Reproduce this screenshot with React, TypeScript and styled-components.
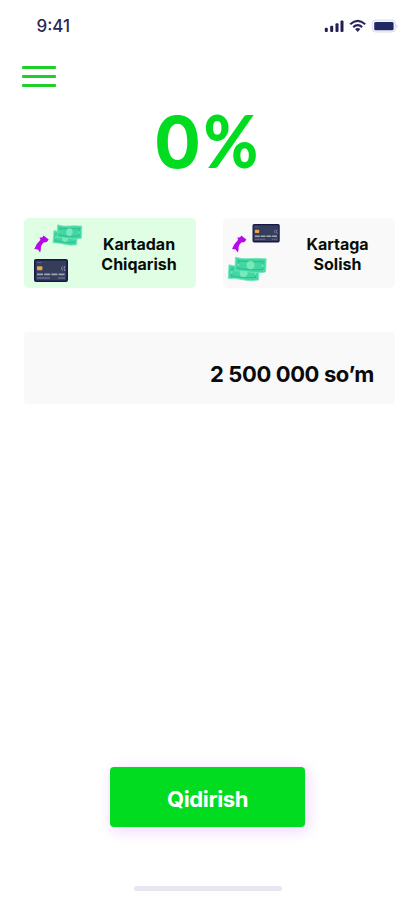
import React from "react";
import styled, { createGlobalStyle } from "styled-components";

const GlobalStyle = createGlobalStyle`
  * { box-sizing: border-box; }
  body { margin: 0; background: #fff; font-family: Inter, sans-serif; }
  button { font-family: inherit; border: 0; padding: 0; cursor: pointer; }
`;

const Screen = styled.div`
  width: 415px;
  height: 900px;
  display: flex;
  flex-direction: column;
  overflow: hidden;
  background: #fff;
`;

const StatusBar = styled.header`
  height: 52px;
  padding: 0 16px 0 36.5px;
  display: flex;
  align-items: center;
  justify-content: space-between;
`;

const Time = styled.span`
  font-size: 17px;
  line-height: 20px;
  font-weight: 500;
  color: #2b2857;
`;

const MenuButton = styled.button`
  width: 34px;
  height: 21px;
  margin: 14px 0 0 21.5px;
  display: flex;
  flex-direction: column;
  justify-content: space-between;
  background: none;
`;

const MenuLine = styled.span`
  display: block;
  width: 34px;
  height: 3px;
  border-radius: 1px;
  background: #20cf29;
`;

const Percent = styled.h1`
  margin: 8.5px 0 0;
  height: 88px;
  line-height: 88px;
  font-size: 72px;
  font-weight: 700;
  display: flex;
  align-items: baseline;
  justify-content: center;
  color: #02dc20;
`;

const Digit = styled.span`
  display: block;
  width: 46.5px;
  transform: scaleX(0.97);
  transform-origin: left;
`;

const PercentSign = styled.span`
  display: block;
  width: 60.5px;
  font-family: Lato, sans-serif;
  font-weight: 900;
  transform: translateX(2.5px) scaleX(0.92);
  transform-origin: left;
`;

const Options = styled.div`
  margin: 34px 20px 0 23.5px;
  height: 70.5px;
  display: flex;
  justify-content: space-between;
`;

const Option = styled.button<{ $active?: boolean }>`
  width: 172px;
  height: 70.5px;
  border-radius: 5px;
  display: flex;
  align-items: center;
  background: ${(p) => (p.$active ? "#dffee4" : "#f9f9f9")};
`;

const OptionLabel = styled.span<{ $shift?: number }>`
  flex: 1;
  margin-left: ${(p) => p.$shift ?? 0}px;
  padding-top: 2px;
  font-size: 16px;
  line-height: 20px;
  font-weight: 700;
  text-align: center;
  color: #080d08;
`;

const AmountField = styled.div`
  margin: 44px 20px 0 24px;
  height: 71.5px;
  padding: 13px 21px 0 0;
  border-radius: 4px;
  display: flex;
  align-items: center;
  justify-content: flex-end;
  background: #f9f9f9;
`;

const Amount = styled.span`
  font-size: 22px;
  line-height: 28px;
  font-weight: 700;
  letter-spacing: -0.38px;
  color: #0a0a0a;
`;

const Footer = styled.footer`
  margin-top: auto;
  height: 133.5px;
  display: flex;
  flex-direction: column;
  align-items: center;
`;

const SearchButton = styled.button`
  width: 195.5px;
  height: 60.5px;
  padding-top: 5px;
  border-radius: 4px;
  font-size: 22px;
  font-weight: 700;
  letter-spacing: -0.35px;
  color: #fff;
  background: #02dc20;
  box-shadow: 2px 3px 14px rgba(190, 50, 255, 0.24);
`;

const HomeIndicator = styled.div`
  width: 148.5px;
  height: 5.5px;
  margin: 58.5px 0 0 1px;
  border-radius: 3px;
  background: #e8e7f1;
`;

const Drawing = styled.svg`
  display: block;
  flex: none;
`;

const StatusIcons = () => (
  <Drawing width="76" height="18" viewBox="0 0 76 18">
    <g fill="#211f55">
      <rect x="1.8" y="10.7" width="3" height="4.3" rx="1" />
      <rect x="7.2" y="8.7" width="3" height="6.3" rx="1" />
      <rect x="12.5" y="6.2" width="3" height="8.8" rx="1" />
      <rect x="17.5" y="3.5" width="3" height="11.5" rx="1" />
    </g>
    <g fill="none" stroke="#28265c" strokeWidth="2.1">
      <path d="M27.2 7.2Q34.7 0.6 42.2 7.2" />
      <path d="M30.2 10.1Q34.7 6.3 39.2 10.1" />
    </g>
    <path d="M32 12.1Q34.7 9.9 37.4 12.1L34.7 15Z" fill="#28265c" />
    <rect x="49.2" y="3" width="23.2" height="12" rx="3.4" fill="#f4f4fc" stroke="#dcdcef" />
    <rect x="51.2" y="5" width="19.4" height="8.2" rx="1.5" fill="#202961" />
    <path d="M73.4 7.3Q75.7 9.2 73.4 11.3Z" fill="#cfcfe3" />
  </Drawing>
);

const BankCard = () => (
  <>
    <rect x=".8" y=".8" width="32.4" height="21.4" rx="1.2" fill="#343d59" stroke="#191747" strokeWidth="1.6" />
    <path d="M3 3.5h5" stroke="#59617a" />
    <rect x="3" y="7.2" width="5.4" height="4" rx="1" fill="#eda451" />
    <path d="M28.5 7.5q-2 2 0 4M31 7q-2 2.3 0 5" fill="none" stroke="#8b92aa" />
    <path d="M3 15.4h28.5" stroke="#a1a5b9" strokeWidth="1.8" strokeDasharray="6 1.2" />
    <path d="M3 19h13M24 19h7" stroke="#656d87" strokeWidth="1.3" />
  </>
);

const Note = () => (
  <>
    <path d="M0 .5Q6 2.3 13 1.4T28 1V15Q21 17 14 15.7T0 15Z" fill="#42d6a2" stroke="#73e8bc" strokeWidth=".8" />
    <path d="M3 4Q11 5.3 25 3.8V12.4Q15 13.7 3 12.5Z" fill="none" stroke="#2cc093" strokeWidth="1.2" />
    <ellipse cx="14" cy="8.3" rx="3.7" ry="4.5" fill="#79e9b9" />
    <path d="M3 7v3M25 7v3" stroke="#79e9b9" strokeWidth="1.3" />
  </>
);

const CurvedArrow = () => (
  <path
    d="M0 13.6Q2.2 8 6.2 4.4L5.2 2.4 8.2 1.8 9.2 0 14.4 4.2 12.6 6.6 9.4 7.2Q6 10 6.6 14.2L5.8 17 3.6 14.2Z"
    fill="#b709ea"
  />
);

const CashOutIcon = () => (
  <Drawing width="72" height="70" viewBox="0 0 72 70">
    <g transform="translate(30 12) rotate(5) scale(.85)"><Note /></g>
    <g transform="translate(33.5 6.4) rotate(2) scale(.87)"><Note /></g>
    <g transform="translate(10.3 17.4)"><CurvedArrow /></g>
    <g transform="translate(10 41)"><BankCard /></g>
  </Drawing>
);

const CashInIcon = () => (
  <Drawing width="72" height="70" viewBox="0 0 72 70">
    <g transform="translate(29.5 6) scale(.8)"><BankCard /></g>
    <g transform="translate(9 17.4)"><CurvedArrow /></g>
    <g transform="translate(6 46.3) rotate(3) scale(1.08 .94)"><Note /></g>
    <g transform="translate(12.4 38.8) rotate(2) scale(1.1 .94)"><Note /></g>
  </Drawing>
);

export default function App() {
  return (
    <>
      <GlobalStyle />
      <Screen>
        <StatusBar>
          <Time>9:41</Time>
          <StatusIcons />
        </StatusBar>
        <MenuButton aria-label="Menu">
          <MenuLine />
          <MenuLine />
          <MenuLine />
        </MenuButton>
        <Percent>
          <Digit>0</Digit>
          <PercentSign>%</PercentSign>
        </Percent>
        <Options>
          <Option $active>
            <CashOutIcon />
            <OptionLabel $shift={-13}>Kartadan<br />Chiqarish</OptionLabel>
          </Option>
          <Option>
            <CashInIcon />
            <OptionLabel $shift={-15}>Kartaga<br />Solish</OptionLabel>
          </Option>
        </Options>
        <AmountField>
          <Amount>2 500 000 so’m</Amount>
        </AmountField>
        <Footer>
          <SearchButton>Qidirish</SearchButton>
          <HomeIndicator />
        </Footer>
      </Screen>
    </>
  );
}
